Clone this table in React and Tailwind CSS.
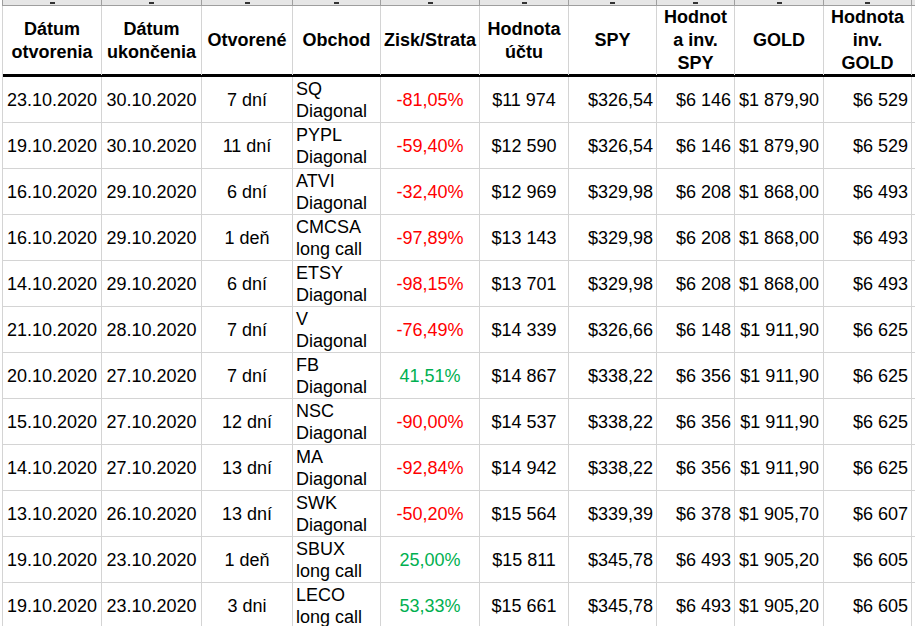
import React from "react";

const cols =
  "grid grid-cols-[99px_100px_91px_88px_99px_89px_88px_78px_89px_88px]";

const headers = [
  ["Dátum", "otvorenia"],
  ["Dátum", "ukončenia"],
  ["Otvorené"],
  ["Obchod"],
  ["Zisk/Strata"],
  ["Hodnota", "účtu"],
  ["SPY"],
  ["Hodnot", "a inv.", "SPY"],
  ["GOLD"],
  ["Hodnota", "inv.", "GOLD"],
];

const rows = [
  ["23.10.2020", "30.10.2020", "7 dní", "SQ", "Diagonal", "-81,05%", "$11 974", "$326,54", "$6 146", "$1 879,90", "$6 529"],
  ["19.10.2020", "30.10.2020", "11 dní", "PYPL", "Diagonal", "-59,40%", "$12 590", "$326,54", "$6 146", "$1 879,90", "$6 529"],
  ["16.10.2020", "29.10.2020", "6 dní", "ATVI", "Diagonal", "-32,40%", "$12 969", "$329,98", "$6 208", "$1 868,00", "$6 493"],
  ["16.10.2020", "29.10.2020", "1 deň", "CMCSA", "long call", "-97,89%", "$13 143", "$329,98", "$6 208", "$1 868,00", "$6 493"],
  ["14.10.2020", "29.10.2020", "6 dní", "ETSY", "Diagonal", "-98,15%", "$13 701", "$329,98", "$6 208", "$1 868,00", "$6 493"],
  ["21.10.2020", "28.10.2020", "7 dní", "V", "Diagonal", "-76,49%", "$14 339", "$326,66", "$6 148", "$1 911,90", "$6 625"],
  ["20.10.2020", "27.10.2020", "7 dní", "FB", "Diagonal", "41,51%", "$14 867", "$338,22", "$6 356", "$1 911,90", "$6 625"],
  ["15.10.2020", "27.10.2020", "12 dní", "NSC", "Diagonal", "-90,00%", "$14 537", "$338,22", "$6 356", "$1 911,90", "$6 625"],
  ["14.10.2020", "27.10.2020", "13 dní", "MA", "Diagonal", "-92,84%", "$14 942", "$338,22", "$6 356", "$1 911,90", "$6 625"],
  ["13.10.2020", "26.10.2020", "13 dní", "SWK", "Diagonal", "-50,20%", "$15 564", "$339,39", "$6 378", "$1 905,70", "$6 607"],
  ["19.10.2020", "23.10.2020", "1 deň", "SBUX", "long call", "25,00%", "$15 811", "$345,78", "$6 493", "$1 905,20", "$6 605"],
  ["19.10.2020", "23.10.2020", "3 dni", "LECO", "long call", "53,33%", "$15 661", "$345,78", "$6 493", "$1 905,20", "$6 605"],
];

const cell = "border-r border-[#d4d4d4] flex items-center min-w-0";

const Row = ({ r }) => {
  const [open, close, days, ticker, kind, pl, acct, spy, invSpy, gold, invGold] = r;
  const loss = pl.startsWith("-");
  return (
    <div className={`${cols} h-[46px] border-b border-[#d4d4d4]`}>
      <div className={`${cell} justify-center`}>{open}</div>
      <div className={`${cell} justify-center`}>{close}</div>
      <div className={`${cell} justify-center`}>{days}</div>
      <div className={`${cell} pl-[3px] overflow-visible`}>
        <div className="whitespace-nowrap">
          {ticker}
          <br />
          {kind}
        </div>
      </div>
      <div
        className={`${cell} justify-center ${
          loss ? "text-[#ff0000]" : "text-[#00b050]"
        }`}
      >
        {pl}
      </div>
      <div className={`${cell} justify-center`}>{acct}</div>
      <div className={`${cell} justify-end pr-[3px]`}>{spy}</div>
      <div className={`${cell} justify-end pr-[3px]`}>{invSpy}</div>
      <div className={`${cell} justify-end pr-[4px]`}>{gold}</div>
      <div className={`${cell} justify-end pr-[3px]`}>{invGold}</div>
    </div>
  );
};

export default function App() {
  return (
    <div className="w-[915px] h-[626px] overflow-hidden bg-white text-black font-['Liberation_Sans',Arial,sans-serif] text-[18px] leading-[22px]">
      {/* column letter strip, only its bottom edge is visible */}
      <div className={`${cols} ml-[2px] h-[6px] bg-[#e6e6e6] border-b border-[#9e9e9e] border-l`}>
        {headers.map((_, i) => (
          <div
            key={i}
            className="border-r border-[#a0a0a0] flex justify-center items-end pb-[1px]"
          >
            <span className="w-[5px] h-[2px] bg-[#333]" />
          </div>
        ))}
      </div>

      <div className="ml-[2px] border-l border-[#d4d4d4]">
        <div className={`${cols} h-[71px] border-b-[3px] border-black font-bold leading-[23px]`}>
          {headers.map((h, i) => (
            <div key={i} className={`${cell} justify-center text-center`}>
              <div className="whitespace-nowrap">
                {h.map((line, j) => (
                  <React.Fragment key={j}>
                    {j > 0 && <br />}
                    {line}
                  </React.Fragment>
                ))}
              </div>
            </div>
          ))}
        </div>

        {rows.map((r, i) => (
          <Row key={i} r={r} />
        ))}
      </div>
    </div>
  );
}
